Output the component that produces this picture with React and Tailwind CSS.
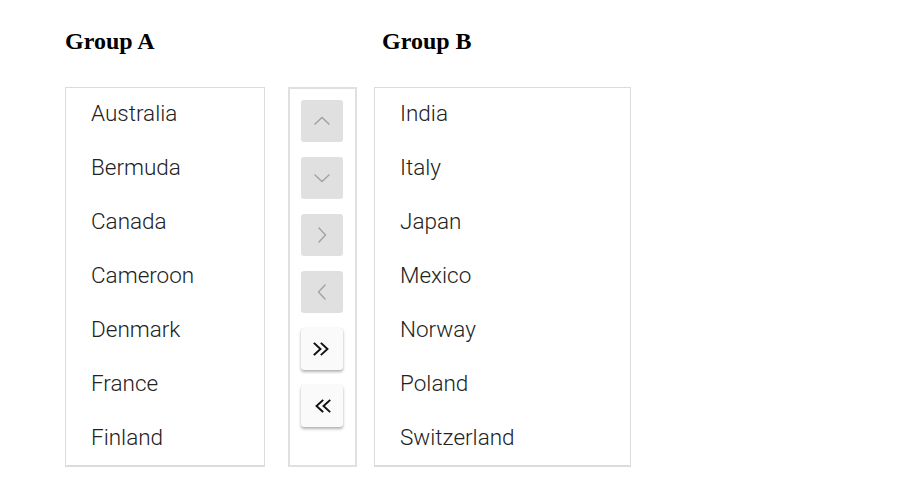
import React from "react";

const A = ["Australia", "Bermuda", "Canada", "Cameroon", "Denmark", "France", "Finland"];
const B = ["India", "Italy", "Japan", "Mexico", "Norway", "Poland", "Switzerland"];

function Chev({ d, color, w = 1.3 }) {
  return (
    <svg width="22" height="22" viewBox="0 0 22 22" fill="none" stroke={color} strokeWidth={w} strokeLinecap="square">
      <path d={d} />
    </svg>
  );
}

function DisBtn({ d }) {
  return (
    <div className="w-[42px] h-[42px] rounded-[3px] bg-[#e0e0e0] flex items-center justify-center">
      <Chev d={d} color="#a0a0a0" />
    </div>
  );
}

function EnBtn({ d }) {
  return (
    <div className="w-[42px] h-[42px] rounded-[3px] bg-[#fafafa] flex items-center justify-center shadow-[0_2px_3px_rgba(0,0,0,0.3),0_0_1px_rgba(0,0,0,0.12)]">
      <Chev d={d} color="#111" w={1.9} />
    </div>
  );
}

function List({ items, w }) {
  return (
    <div className={`${w} h-[380px] border border-[#dcdcdc] border-b-2 bg-white`}>
      {items.map((t) => (
        <div key={t} className="h-[54px] flex items-center pl-[25px] pb-[2px] text-[22.5px] font-light text-[#222] font-['Roboto',sans-serif]">
          {t}
        </div>
      ))}
    </div>
  );
}

export default function App() {
  return (
    <div className="w-[916px] h-[501px] bg-white pl-[65px] pt-[26px]">
      <div className="flex font-['Liberation_Serif',serif] font-bold text-[24px] text-black leading-[30px]">
        <div className="w-[317px]">Group A</div>
        <div>Group B</div>
      </div>
      <div className="flex mt-[31px]">
        <List items={A} w="w-[200px]" />
        <div className="ml-[23px] w-[69px] h-[380px] border-2 border-[#e0e0e0] flex flex-col items-start pl-[11px] pt-[11px] gap-[15px]">
          <DisBtn d="M4 14 L11 7.5 L18 14" />
          <DisBtn d="M4 8 L11 14.5 L18 8" />
          <DisBtn d="M8 4 L14.5 11 L8 18" />
          <DisBtn d="M14 4 L7.5 11 L14 18" />
          <EnBtn d="M3.5 5.5 L9.5 11 L3.5 16.5 M10.5 5.5 L16.5 11 L10.5 16.5" />
          <EnBtn d="M11.5 5.5 L5.5 11 L11.5 16.5 M18.5 5.5 L12.5 11 L18.5 16.5" />
        </div>
        <div className="ml-[17px]">
          <List items={B} w="w-[257px]" />
        </div>
      </div>
    </div>
  );
}
